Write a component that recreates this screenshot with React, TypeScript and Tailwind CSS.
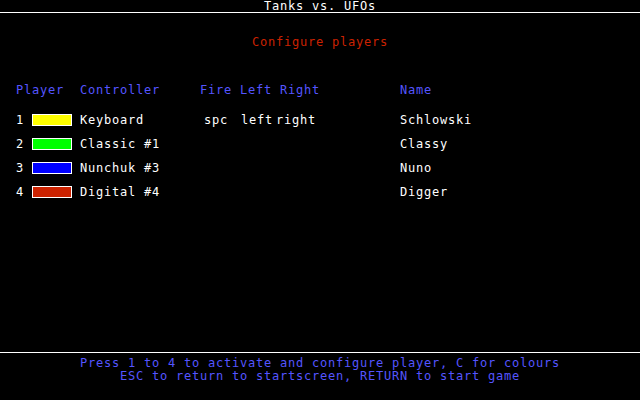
import React from "react";

const players = [
  { n: "1", color: "bg-[#ffff00]", ctrl: "Keyboard", fire: "spc", left: "left", right: "right", name: "Schlowski" },
  { n: "2", color: "bg-[#00ff00]", ctrl: "Classic #1", fire: "", left: "", right: "", name: "Classy" },
  { n: "3", color: "bg-[#0000ff]", ctrl: "Nunchuk #3", fire: "", left: "", right: "", name: "Nuno" },
  { n: "4", color: "bg-[#cc2200]", ctrl: "Digital #4", fire: "", left: "", right: "", name: "Digger" },
];

export default function App() {
  return (
    <div
      className="h-[400px] w-[640px] bg-black text-white flex flex-col text-[12px] leading-[12px] tracking-[0.776px] whitespace-pre"
      style={{ fontFamily: '"DejaVu Sans Mono", "Liberation Mono", monospace' }}
    >
      <div className="h-[12px] text-center">Tanks vs. UFOs</div>
      <div className="h-px bg-white" />
      <div className="mt-[23px] h-[12px] text-center text-[#cc2200]">Configure players</div>

      <div className="mt-[36px] h-[12px] flex pl-[16px] text-[#5555ff]">
        <div className="w-[64px]">Player</div>
        <div className="w-[120px]">Controller</div>
        <div className="w-[40px]">Fire</div>
        <div className="w-[40px]">Left</div>
        <div className="w-[120px]">Right</div>
        <div>Name</div>
      </div>

      <div className="mt-[18px] flex flex-col gap-[12px]">
        {players.map((p) => (
          <div key={p.n} className="h-[12px] flex pl-[16px]">
            <div className="w-[16px]">{p.n}</div>
            <div className="w-[48px]">
              <div className={`w-[40px] h-[12px] border border-white ${p.color}`} />
            </div>
            <div className="w-[120px]">{p.ctrl}</div>
            <div className="w-[40px] pl-[4px]">{p.fire}</div>
            <div className="w-[36px] pl-[1px]">{p.left}</div>
            <div className="w-[124px]">{p.right}</div>
            <div>{p.name}</div>
          </div>
        ))}
      </div>

      <div className="mt-auto h-px bg-white" />
      <div className="pt-[4px] pb-[17px] text-center text-[#5555ff] leading-[13px]">
        <div>Press 1 to 4 to activate and configure player, C for colours</div>
        <div>ESC to return to startscreen, RETURN to start game</div>
      </div>
    </div>
  );
}
